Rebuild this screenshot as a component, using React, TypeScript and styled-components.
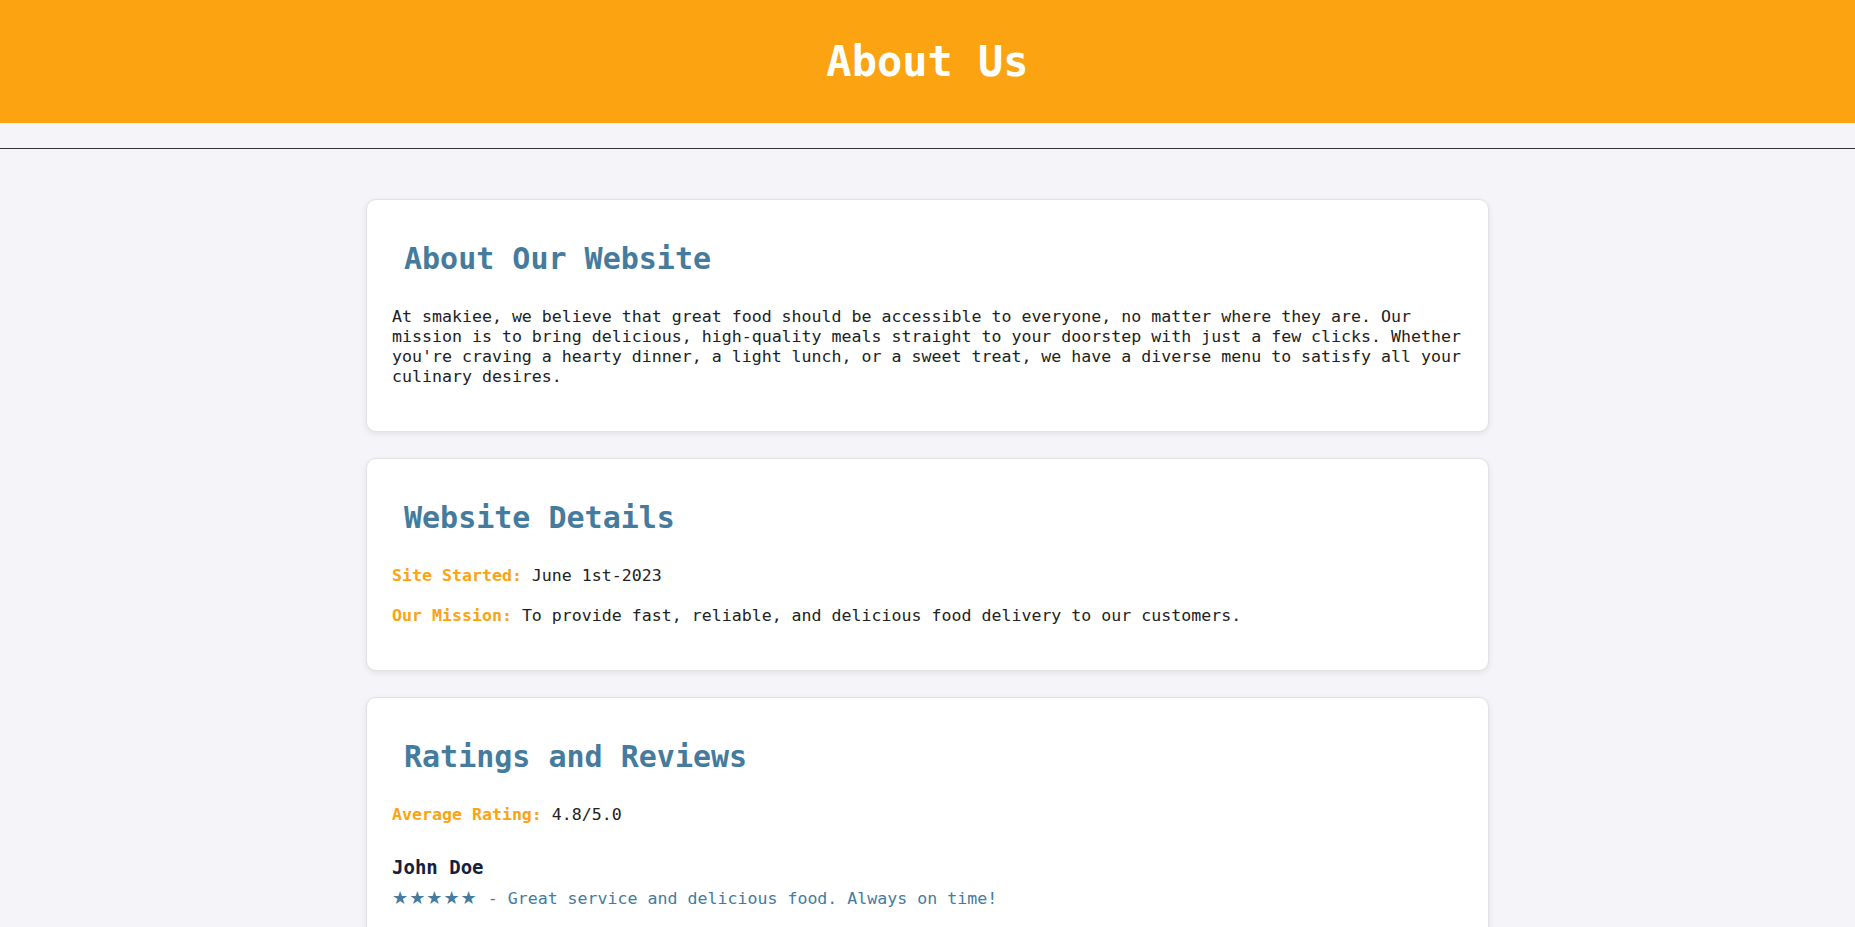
import React from 'react'
import styled, { createGlobalStyle } from 'styled-components'

type Review = {
    id: number
    name: string
    stars: number
    text: string
}

const reviews: Review[] = [
    { id: 1, name: 'John Doe', stars: 5, text: 'Great service and delicious food. Always on time!' },
    { id: 2, name: 'Jane Smith', stars: 4, text: 'Wide variety of dishes and easy ordering. Highly recommend!' },
    { id: 3, name: 'Michael Brown', stars: 5, text: 'The best food delivery app I have ever used.' },
    { id: 4, name: 'Emily Johnson', stars: 5, text: 'Fresh meals, friendly drivers and great prices.' }
]

const GlobalStyle = createGlobalStyle`
    body {
        margin: 0;
        background: #f4f4f9;
        color: #222;
        font-family: 'DejaVu Sans Mono', 'Liberation Mono', monospace;
    }
`

function App() {
    return (
        <>
            <GlobalStyle />
            <Header>
                <Title>About Us</Title>
            </Header>
            <Divider />
            <Main>
                <Card>
                    <CardTitle>About Our Website</CardTitle>
                    <Text>
                        At smakiee, we believe that great food should be accessible to everyone, no matter where
                        they are. Our mission is to bring delicious, high-quality meals straight to your doorstep
                        with just a few clicks. Whether you're craving a hearty dinner, a light lunch, or a sweet
                        treat, we have a diverse menu to satisfy all your culinary desires.
                    </Text>
                </Card>

                <Card>
                    <CardTitle>Website Details</CardTitle>
                    <Text>
                        <Label>Site Started:</Label> June 1st-2023
                    </Text>
                    <Text>
                        <Label>Our Mission:</Label> To provide fast, reliable, and delicious food delivery to our
                        customers.
                    </Text>
                </Card>

                <Card>
                    <CardTitle>Ratings and Reviews</CardTitle>
                    <Text>
                        <Label>Average Rating:</Label> 4.8/5.0
                    </Text>
                    {reviews.map((review) => (
                        <ReviewItem key={review.id}>
                            <ReviewName>{review.name}</ReviewName>
                            <ReviewText>
                                <Stars>{'★'.repeat(review.stars)}</Stars> - {review.text}
                            </ReviewText>
                        </ReviewItem>
                    ))}
                </Card>

                <Card>
                    <CardTitle>Contact Us</CardTitle>
                    <Text>
                        <Label>Email:</Label> support@smakiee.com
                    </Text>
                    <Text>
                        <Label>Phone:</Label> +1 (555) 123-4567
                    </Text>
                    <Text>
                        <Label>Address:</Label> 123 Food Street, Flavor Town
                    </Text>
                </Card>
            </Main>
        </>
    )
}

export default App

const Header = styled.header`
    background: #fca311;
    padding: 30px 0;
    text-align: center;
`

const Title = styled.h1`
    margin: 0;
    color: #fff;
    font-size: 42px;
    line-height: 63px;
    font-weight: bold;
`

const Divider = styled.hr`
    margin: 25px 0 50px;
    border: none;
    border-top: 1px solid #333;
`

const Main = styled.main`
    padding-bottom: 40px;
`

const Card = styled.section`
    box-sizing: border-box;
    max-width: 1123px;
    margin: 0 auto 26px;
    padding: 20px 25px 24px;
    background: #fff;
    border: 1px solid #e2e2e2;
    border-radius: 10px;
    box-shadow: 0 2px 6px rgba(0, 0, 0, 0.08);
`

const CardTitle = styled.h2`
    margin: 21px 0 30px;
    padding-left: 12px;
    color: #457b9d;
    font-size: 30px;
    line-height: 36px;
    font-weight: bold;
`

const Text = styled.p`
    margin: 0 0 20px;
    font-size: 16.6px;
    line-height: 20px;
    color: #222;
`

const Label = styled.strong`
    color: #fca311;
    font-weight: bold;
`

const ReviewItem = styled.div`
    padding-top: 10px;
`

const ReviewName = styled.h3`
    margin: 0 0 9px;
    color: #14213d;
    font-size: 19px;
    line-height: 24px;
    font-weight: bold;
`

const ReviewText = styled.p`
    margin: 0 0 20px;
    color: #457b9d;
    font-size: 16.6px;
    line-height: 20px;
`

const Stars = styled.span`
    font-family: 'DejaVu Sans', sans-serif;
    font-size: 18px;
    letter-spacing: 1px;
`
